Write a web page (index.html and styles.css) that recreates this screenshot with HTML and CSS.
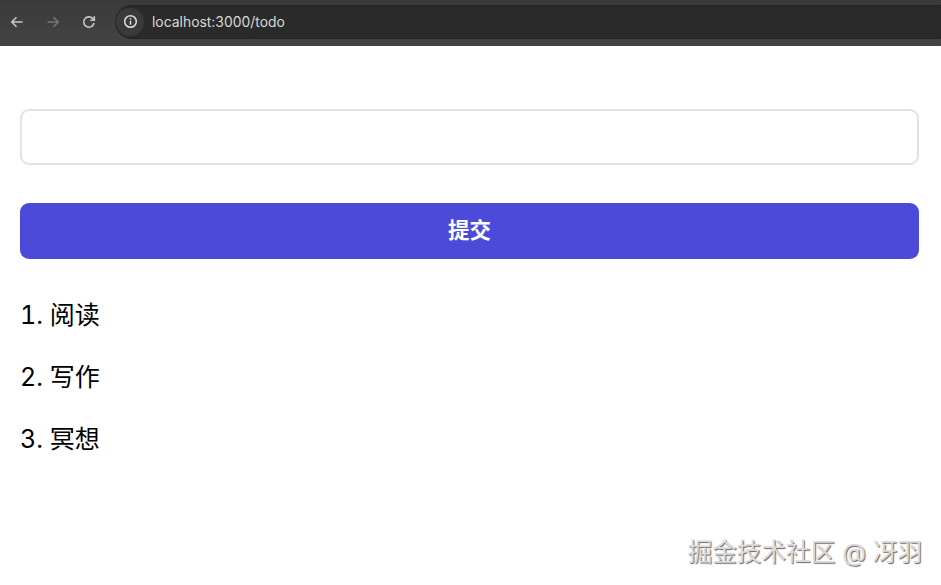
FILE: index.html
```html
<!DOCTYPE html>
<html lang="zh">
<head>
<meta charset="utf-8">
<title>todo</title>
<link rel="stylesheet" href="styles.css">
</head>
<body>
<header class="toolbar">
  <nav class="nav-icons">
    <svg class="nav-icon" viewBox="0 0 16 16"><path d="M13.5 8H3M7.5 3.2 2.8 8l4.7 4.8"/></svg>
    <svg class="nav-icon nav-icon-off" viewBox="0 0 16 16"><path d="M2.5 8H13M8.5 3.2 13.2 8l-4.7 4.8"/></svg>
    <svg class="nav-icon" viewBox="0 0 16 16"><path d="M13 9a5.2 5.2 0 1 1-1.4-4.6L13.2 6"/><path d="M13.3 2.2v4h-4"/></svg>
  </nav>
  <div class="address">
    <span class="site-info">
      <svg class="info-icon" viewBox="0 0 16 16"><circle cx="8" cy="8" r="6.2"/><path d="M8 7.2v4.2"/><path d="M8 4.4v1.6"/></svg>
    </span>
    <span class="url">localhost:3000/todo</span>
  </div>
</header>
<main class="page">
  <input class="field" type="text" aria-label="todo">
  <button class="submit" type="button">提交</button>
  <ol class="todos">
    <li>阅读</li>
    <li>写作</li>
    <li>冥想</li>
  </ol>
</main>
<div class="watermark">掘金技术社区 @ 冴羽</div>
</body>
</html>
```
FILE: styles.css
```css
* { box-sizing: border-box; }
html, body { height: 100%; }
body {
  margin: 0;
  background: #fff;
  font-family: Inter, "Noto Sans CJK SC", sans-serif;
  overflow: hidden;
  position: relative;
}
.toolbar {
  height: 46px;
  background: linear-gradient(#3a3a3a, #444);
  display: flex;
  align-items: center;
  padding: 0 0 3px 9px;
}
.nav-icons { display: flex; gap: 20px; width: 106px; }
.nav-icon {
  width: 16px;
  height: 16px;
  fill: none;
  stroke: #c8c8c8;
  stroke-width: 1.6;
}
.nav-icon-off { stroke: #777; }
.address {
  flex: 1;
  height: 34px;
  background: #2a2a2a;
  border: solid #242424;
  border-width: 1px 0;
  border-radius: 17px 0 0 17px;
  display: flex;
  align-items: center;
}
.site-info {
  width: 28px;
  height: 28px;
  border-radius: 50%;
  background: #3a3a3a;
  display: flex;
  align-items: center;
  justify-content: center;
  margin-left: 1px;
}
.info-icon {
  width: 15px;
  height: 15px;
  fill: none;
  stroke: #ddd;
  stroke-width: 1.6;
}
.url {
  margin-left: 8px;
  color: #d8d8d8;
  font: 13.9px Inter, sans-serif;
}
.page {
  padding: 63px 22px 0 20px;
  display: flex;
  flex-direction: column;
  gap: 38px;
}
.field {
  height: 56px;
  border: 2px solid #e2e2e4;
  border-radius: 9px;
  background: #fff;
}
.submit {
  height: 56px;
  border: 0;
  border-radius: 9px;
  background: #4c4bd9;
  color: #fff;
  font-size: 21.5px;
  font-weight: 700;
  font-family: inherit;
  padding: 0 0 6px;
}
.todos {
  margin: 0;
  padding: 0;
  list-style: none;
  counter-reset: todo;
  font-size: 25px;
  line-height: 36px;
  color: #000;
  font-variant-numeric: tabular-nums;
  display: flex;
  flex-direction: column;
  gap: 26px;
}
.todos li { counter-increment: todo; }
.todos li::before { content: counter(todo) ". "; }
.watermark {
  position: absolute;
  right: 19px;
  bottom: 18px;
  font-size: 24.6px;
  line-height: 30px;
  color: #dcdcdc;
  text-shadow: 1px 1px 1px #666;
  white-space: nowrap;
}
```
